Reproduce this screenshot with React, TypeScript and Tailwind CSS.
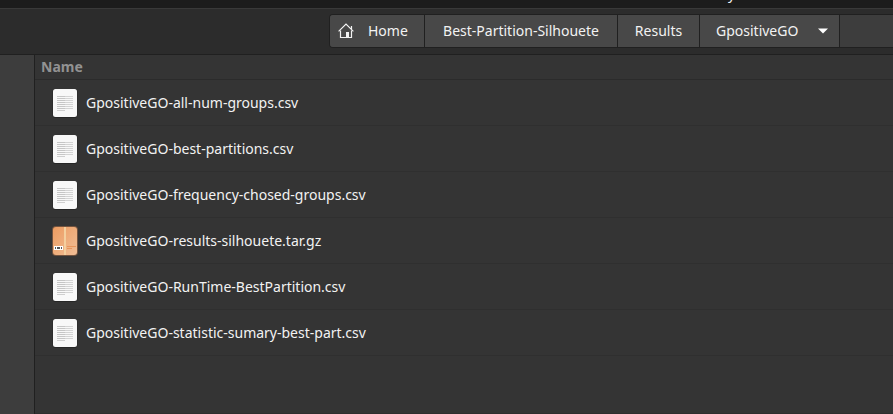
import React from "react";

type FileKind = "text" | "archive";

const files: { name: string; kind: FileKind }[] = [
  { name: "GpositiveGO-all-num-groups.csv", kind: "text" },
  { name: "GpositiveGO-best-partitions.csv", kind: "text" },
  { name: "GpositiveGO-frequency-chosed-groups.csv", kind: "text" },
  { name: "GpositiveGO-results-silhouete.tar.gz", kind: "archive" },
  { name: "GpositiveGO-RunTime-BestPartition.csv", kind: "text" },
  { name: "GpositiveGO-statistic-sumary-best-part.csv", kind: "text" },
];

function HomeIcon() {
  return (
    <svg width="16" height="16" viewBox="0 0 16 16" fill="none" aria-hidden="true">
      <path d="M0.6 8.4 8 1l7.4 7.4M13.5 6V3" stroke="#f2f2f2" strokeWidth="1.2" />
      <path d="M2.5 7.5v7h11v-7" stroke="#f2f2f2" strokeWidth="1.2" />
      <path d="M8 9h3v6H8z" fill="#f2f2f2" />
    </svg>
  );
}

function TextFileIcon() {
  return (
    <svg width="26" height="30" viewBox="0 0 26 30" aria-hidden="true">
      <rect x="0.5" y="1" width="25" height="29" rx="3" fill="#262626" />
      <rect x="1" y="1" width="24" height="28" rx="2.5" fill="#f8f8f8" />
      {[8, 10, 12, 14, 16, 18, 20].map((y) => (
        <g key={y}>
          <rect x="5" y={y} width="8" height="1" fill="#c6c6c6" />
          <rect x="13" y={y} width="8" height="1" fill="#d4d4d4" />
        </g>
      ))}
      <rect x="5" y="22" width="8" height="1" fill="#cfcfcf" />
    </svg>
  );
}

function ArchiveIcon() {
  return (
    <svg width="26" height="30" viewBox="0 0 26 30" aria-hidden="true">
      <defs>
        <linearGradient id="box" x1="0" y1="0" x2="1" y2="1">
          <stop offset="0" stopColor="#ed9c61" />
          <stop offset="1" stopColor="#f0be96" />
        </linearGradient>
      </defs>
      <rect x="0" y="0" width="26" height="30" rx="4" fill="#74543f" />
      <rect x="1" y="1" width="24" height="28" rx="3" fill="url(#box)" />
      <rect x="12" y="1" width="2" height="28" fill="#f4cf9e" />
      <rect x="2" y="20" width="9" height="4" fill="#fff" />
      <path d="M3 21h1v2H3zM5 21h3v2H5zM9 21h1v2H9z" fill="#555" />
      <path d="M15 20h9v1h-9zM15 22h5v1h-5z" fill="#e8965c" />
    </svg>
  );
}

const crumb = "flex h-8 items-center border-r border-[#202020] bg-[#484848]";

export default function App() {
  return (
    <div className="flex h-screen flex-col overflow-hidden bg-[#343434] font-['Noto_Sans','Open_Sans',sans-serif] text-sm text-[#f2f2f2]">
      <div className="flex h-2 shrink-0 items-end overflow-hidden bg-[#1c1c1c] pb-1 pl-[728px] leading-5">
        y
      </div>
      <header className="flex h-[47px] shrink-0 border-t border-b border-t-[#393939] border-b-[#202020] bg-[#2c2c2c] pt-[5px]">
        <nav
          aria-label="Path"
          className="ml-[329px] flex h-[34px] flex-1 overflow-hidden rounded-l border border-r-0 border-[#202020] bg-[#3d3d3d]"
        >
          <button type="button" className={`${crumb} w-[95px] gap-3.5 pl-2`}>
            <HomeIcon />
            Home
          </button>
          <button type="button" className={`${crumb} w-[193px] justify-center`}>
            Best-Partition-Silhouete
          </button>
          <button type="button" className={`${crumb} w-[82px] justify-center`}>
            Results
          </button>
          <button type="button" className={`${crumb} w-[140px] justify-between pr-[11px] pl-4`}>
            GpositiveGO
            <svg width="10" height="6" viewBox="0 0 10 6" aria-hidden="true">
              <path d="M0 0.5h10L5 5.5z" fill="#fff" />
            </svg>
          </button>
        </nav>
      </header>
      <div className="flex min-h-0 flex-1">
        <aside className="w-[35px] shrink-0 border-r border-[#202020] bg-[#3d3d3d]" />
        <main className="flex-1 border-b border-[#2e2e2e]">
          <table className="w-full border-separate border-spacing-0">
            <thead>
              <tr>
                <th className="h-[25px] border-b border-[#2b2b2b] p-0 pl-1.5 text-left font-bold text-[#929292]">
                  Name
                </th>
              </tr>
            </thead>
            <tbody>
              {files.map((file) => (
                <tr key={file.name}>
                  <td className="h-[46px] border-b border-[#2f2f2f] p-0 pl-[17px]">
                    <div className="flex items-center gap-2">
                      {file.kind === "text" ? <TextFileIcon /> : <ArchiveIcon />}
                      <span>{file.name}</span>
                    </div>
                  </td>
                </tr>
              ))}
            </tbody>
          </table>
        </main>
      </div>
    </div>
  );
}
